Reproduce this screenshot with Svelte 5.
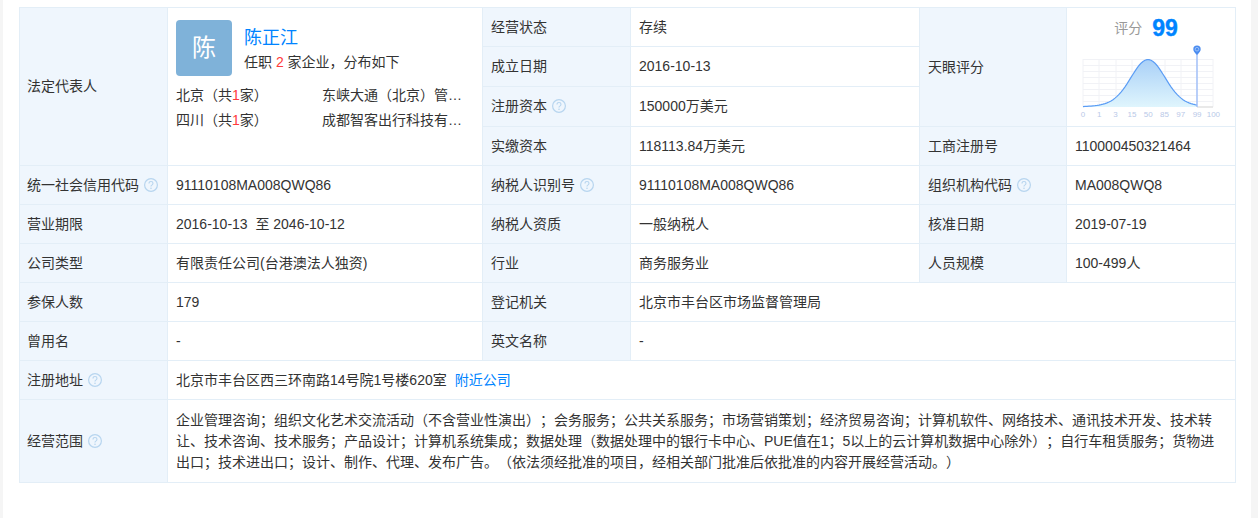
<script>
  const cities = [
    { city: '北京', count: 1, company: '东峡大通（北京）管理咨询有限公司' },
    { city: '四川', count: 1, company: '成都智客出行科技有限公司' },
  ];

  const ticks = ['0', '1', '3', '15', '50', '85', '97', '99', '100'];

  // bell curve of the score chart, x runs from the left grid edge to the pin
  const baseY = 65;
  function curveY(x) {
    const d = x - 65;
    const narrow = Math.exp(-(d * d) / (2 * 16.5 * 16.5));
    const wide = Math.exp(-(d * d) / (2 * 28 * 28));
    return baseY - 47.5 * (0.86 * narrow + 0.14 * wide);
  }

  const points = [];
  for (let x = 0; x <= 114; x += 2) points.push(`${x},${curveY(x).toFixed(2)}`);
  const linePath = 'M' + points.join(' L');
  const areaPath = `${linePath} L114,${baseY} L0,${baseY} Z`;
</script>

{#snippet help()}
  <svg class="help" viewBox="0 0 14 14" width="14" height="14" aria-hidden="true">
    <circle cx="7" cy="7" r="6.4" fill="none" stroke="currentColor" stroke-width="1.200" />
    <path d="M5 5.4c0-1.2.9-1.9 2-1.9s2 .7 2 1.8c0 1-.6 1.400-1.200 1.800-.5.300-.8.600-.8 1.200v.3" fill="none" stroke="currentColor" stroke-width="1.100" />
    <circle cx="7" cy="10.300" r=".8" fill="currentColor" />
  </svg>
{/snippet}

<div class="page" lang="zh-CN">
  <table class="info">
    <colgroup>
      <col style="width: 148px" />
      <col style="width: 315px" />
      <col style="width: 148px" />
      <col style="width: 289px" />
      <col style="width: 147px" />
      <col style="width: 169px" />
    </colgroup>
    <tbody>
      <tr class="h39">
        <td class="label lead" rowspan="4">法定代表人</td>
        <td class="legal" rowspan="4">
          <div class="person">
            <div class="avatar">陈</div>
            <div class="person-info">
              <a class="name" href="#top">陈正江</a>
              <div class="sub">任职 <em>2</em> 家企业，分布如下</div>
            </div>
          </div>
          <div class="cities">
            {#each cities as c}
              <div class="city-row">
                <span class="city">{c.city}（共<em>{c.count}</em>家）</span>
                <span class="company">{c.company}</span>
              </div>
            {/each}
          </div>
        </td>
        <td class="label">经营状态</td>
        <td>存续</td>
        <td class="label" rowspan="3">天眼评分</td>
        <td class="score-cell" rowspan="3">
          <div class="score">
            <span class="score-label">评分</span>
            <span class="score-num">99</span>
          </div>
          <svg class="chart" viewBox="0 0 146 78" width="146" height="78" aria-hidden="true">
            <defs>
              <linearGradient id="bell" x1="0" y1="0" x2="0" y2="1">
                <stop offset="0" stop-color="#a9d0f7" />
                <stop offset="1" stop-color="#dff5fd" />
              </linearGradient>
            </defs>
            <g transform="translate(8 0)">
              <g stroke="#f1f2f6" stroke-width="1" fill="none">
                {#each [0, 16, 33, 49, 65, 82, 98, 114, 130] as x}
                  <line x1={x} y1="17" x2={x} y2={baseY} />
                {/each}
                {#each [17.500, 23.500, 29.500, 35.500, 41.500, 47.500, 53.500, 59.500] as y}
                  <line x1="0" y1={y} x2="130" y2={y} />
                {/each}
              </g>
              <path d={areaPath} fill="url(#bell)" />
              <path d={linePath} fill="none" stroke="#5b9df5" stroke-width="1.200" />
              <line x1="114" y1="65" x2="130" y2="65" stroke="#e2e2e2" stroke-width="1.500" />
              <line x1="114" y1="8" x2="114" y2={baseY} stroke="#9dbdf8" stroke-width="1.400" />
              <path d="M114 13c-2.200-2.300-3.700-3.900-3.700-5.800a3.700 3.700 0 0 1 7.400 0c0 1.900-1.500 3.500-3.700 5.800z" fill="#4c8df0" />
              <circle cx="114" cy="7.200" r="1.800" fill="none" stroke="#a9cbfa" stroke-width=".8" />
              {#each ticks as t, i}
                <text x={i * 16.300} y="75" text-anchor="middle" class="tick">{t}</text>
              {/each}
            </g>
          </svg>
        </td>
      </tr>
      <tr class="h40">
        <td class="label">成立日期</td>
        <td>2016-10-13</td>
      </tr>
      <tr class="h40">
        <td class="label">注册资本 {@render help()}</td>
        <td>150000万美元</td>
      </tr>
      <tr class="h39">
        <td class="label">实缴资本</td>
        <td>118113.84万美元</td>
        <td class="label">工商注册号</td>
        <td>110000450321464</td>
      </tr>
      <tr class="h39">
        <td class="label lead">统一社会信用代码 {@render help()}</td>
        <td>91110108MA008QWQ86</td>
        <td class="label">纳税人识别号 {@render help()}</td>
        <td>91110108MA008QWQ86</td>
        <td class="label">组织机构代码 {@render help()}</td>
        <td>MA008QWQ8</td>
      </tr>
      <tr class="h39">
        <td class="label lead">营业期限</td>
        <td>2016-10-13&nbsp;&nbsp;至&nbsp;2046-10-12</td>
        <td class="label">纳税人资质</td>
        <td>一般纳税人</td>
        <td class="label">核准日期</td>
        <td>2019-07-19</td>
      </tr>
      <tr class="h39">
        <td class="label lead">公司类型</td>
        <td>有限责任公司(台港澳法人独资)</td>
        <td class="label">行业</td>
        <td>商务服务业</td>
        <td class="label">人员规模</td>
        <td>100-499人</td>
      </tr>
      <tr class="h39">
        <td class="label lead">参保人数</td>
        <td>179</td>
        <td class="label">登记机关</td>
        <td colspan="3">北京市丰台区市场监督管理局</td>
      </tr>
      <tr class="h39">
        <td class="label lead">曾用名</td>
        <td>-</td>
        <td class="label">英文名称</td>
        <td colspan="3">-</td>
      </tr>
      <tr class="h39">
        <td class="label lead">注册地址 {@render help()}</td>
        <td colspan="5">北京市丰台区西三环南路14号院1号楼620室<a class="near" href="#top">附近公司</a></td>
      </tr>
      <tr class="h83">
        <td class="label lead">经营范围 {@render help()}</td>
        <td class="scope" colspan="5">企业管理咨询；组织文化艺术交流活动（不含营业性演出）；会务服务；公共关系服务；市场营销策划；经济贸易咨询；计算机软件、网络技术、通讯技术开发、技术转让、技术咨询、技术服务；产品设计；计算机系统集成；数据处理（数据处理中的银行卡中心、PUE值在1；5以上的云计算机数据中心除外）；自行车租赁服务；货物进出口；技术进出口；设计、制作、代理、发布广告。（依法须经批准的项目，经相关部门批准后依批准的内容开展经营活动。）</td>
      </tr>
    </tbody>
  </table>
</div>

<style>
  :global(body) {
    background: #f5f5f5;
  }

  .page {
    box-sizing: border-box;
    width: 1248px;
    height: 518px;
    margin-left: 3px;
    padding: 7px 0 0 16px;
    background: #fff;
    font-family: "Liberation Sans", "Noto Sans CJK SC", sans-serif;
    font-size: 14px;
    color: #333;
    text-spacing-trim: space-all;
    overflow: hidden;
  }

  .info {
    table-layout: fixed;
    width: 1216px;
    border-collapse: collapse;
  }

  .info td {
    border: 1px solid #e3eef7;
    padding: 0 8px;
    line-height: 22px;
    vertical-align: middle;
  }

  .h39 { height: 39px; }
  .h40 { height: 40px; }
  .h83 { height: 83px; }

  .h40 td,
  .info td[rowspan] {
    padding-bottom: 1px;
  }

  .info .label {
    background: #eff6fd;
    white-space: nowrap;
    padding-right: 0;
  }

  .info .lead {
    padding-left: 7px;
  }

  .help {
    color: #b7d5ef;
    vertical-align: -2px;
    margin-left: 1px;
  }

  .info .legal {
    vertical-align: top;
    padding-top: 12px;
  }

  .person {
    display: flex;
    gap: 12px;
  }

  .avatar {
    flex: none;
    width: 56px;
    height: 56px;
    border-radius: 4px;
    background: #7fb2d9;
    color: #fff;
    font-size: 24px;
    line-height: 56px;
    text-align: center;
  }

  .name {
    display: block;
    margin-top: 6px;
    color: #0084ff;
    font-size: 18px;
    line-height: 24px;
    text-decoration: none;
  }

  .sub {
    line-height: 24px;
  }

  em {
    font-style: normal;
    color: #ff3b3b;
  }

  .cities {
    margin-top: 7px;
  }

  .city-row {
    display: flex;
    height: 25px;
    line-height: 25px;
  }

  .city {
    flex: none;
    width: 146px;
  }

  .company {
    width: 140px;
    white-space: nowrap;
    overflow: hidden;
    text-overflow: ellipsis;
  }

  .info .score-cell {
    padding: 0;
    vertical-align: top;
  }

  .score {
    display: flex;
    justify-content: center;
    align-items: center;
    gap: 10px;
    height: 24px;
    margin-top: 8px;
    padding-right: 10px;
  }

  .score-label {
    color: #999;
  }

  .score-num {
    color: #0084ff;
    font-size: 23px;
    font-weight: 700;
    -webkit-text-stroke: 0.4px #0084ff;
  }

  .chart {
    display: block;
    margin: 2px 0 0 8px;
  }

  .tick {
    font-size: 8px;
    fill: #b9c9e8;
  }

  .near {
    margin-left: 8px;
    color: #0084ff;
    text-decoration: none;
  }

  .info .scope {
    padding-top: 8px;
    padding-bottom: 8px;
    line-height: 21px;
  }
</style>
